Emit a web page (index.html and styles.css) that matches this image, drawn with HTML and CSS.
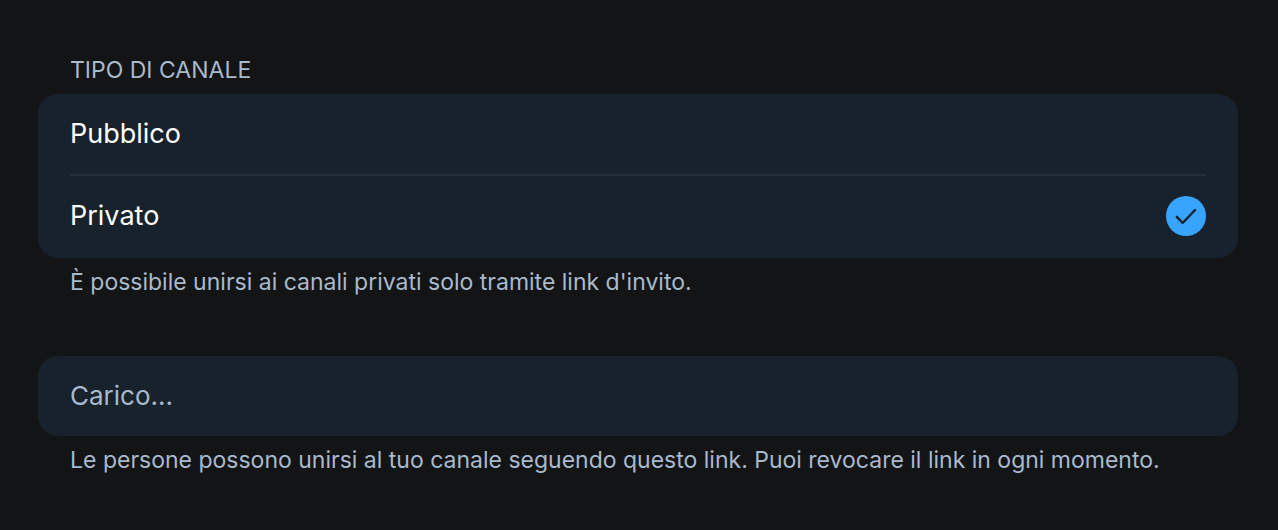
FILE: index.html
```html
<!DOCTYPE html>
<html lang="it">
<head>
    <meta charset="UTF-8">
    <meta name="viewport" content="width=device-width, initial-scale=1.0">
    <title>Tipo di canale</title>
    <link rel="stylesheet" href="styles.css">
</head>
<body>
    <form class="settings">
        <!-- Channel type -->
        <fieldset class="section">
            <legend class="section-title">TIPO DI CANALE</legend>
            <div class="card">
                <label class="option">
                    <input class="option-input" type="radio" name="type" value="public">
                    <span class="option-label">Pubblico</span>
                    <svg class="check" width="40" height="40" viewBox="0 0 40 40" aria-hidden="true">
                        <circle cx="20" cy="20" r="20"/>
                        <path d="M10.8 20.8l5.9 6.2L29 14"/>
                    </svg>
                </label>
                <label class="option">
                    <input class="option-input" type="radio" name="type" value="private" checked>
                    <span class="option-label">Privato</span>
                    <svg class="check" width="40" height="40" viewBox="0 0 40 40" aria-hidden="true">
                        <circle cx="20" cy="20" r="20"/>
                        <path d="M10.8 20.8l5.9 6.2L29 14"/>
                    </svg>
                </label>
            </div>
            <p class="hint">È possibile unirsi ai canali privati solo tramite link d'invito.</p>
        </fieldset>

        <!-- Invite link -->
        <section class="section">
            <div class="card">
                <p class="link-status" role="status">Carico...</p>
            </div>
            <p class="hint">Le persone possono unirsi al tuo canale seguendo questo link. Puoi revocare il link in ogni momento.</p>
        </section>
    </form>
</body>
</html>
```

FILE: styles.css
```css
* {
    margin: 0;
    padding: 0;
    box-sizing: border-box;
}

body {
    background-color: #131415;
    font-family: Inter, "Liberation Sans", sans-serif;
    color: #ffffff;
}

.settings {
    display: flex;
    flex-direction: column;
    gap: 58px;
    padding: 54px 40px 40px 38px;
}

.section {
    border: none;
    min-width: 0;
}

.section-title {
    padding: 0 32px 8px;
    font-size: 23px;
    line-height: 32px;
    color: #a9bacd;
}

.card {
    padding: 0 32px;
    background-color: #18222c;
    border-radius: 20px;
}

.option {
    display: flex;
    align-items: center;
    justify-content: space-between;
    min-height: 82px;
    border-bottom: 2px solid #232f3d;
    cursor: pointer;
}

.option:last-child {
    border-bottom-color: transparent;
}

.option-input {
    position: absolute;
    opacity: 0;
}

.option-label {
    font-size: 27px;
    line-height: 32px;
}

.check {
    display: none;
}

.check circle {
    fill: #37a4fd;
}

.check path {
    fill: none;
    stroke: #18222c;
    stroke-width: 2.4;
    stroke-linecap: round;
    stroke-linejoin: round;
}

.option-input:checked ~ .check {
    display: block;
}

.option-input:focus-visible ~ .option-label {
    text-decoration: underline;
}

.link-status {
    padding: 24px 0;
    font-size: 26px;
    line-height: 32px;
    color: #a9bacd;
}

.hint {
    padding: 8px 32px 0;
    font-size: 23px;
    line-height: 32px;
    color: #a9bacd;
}
```
